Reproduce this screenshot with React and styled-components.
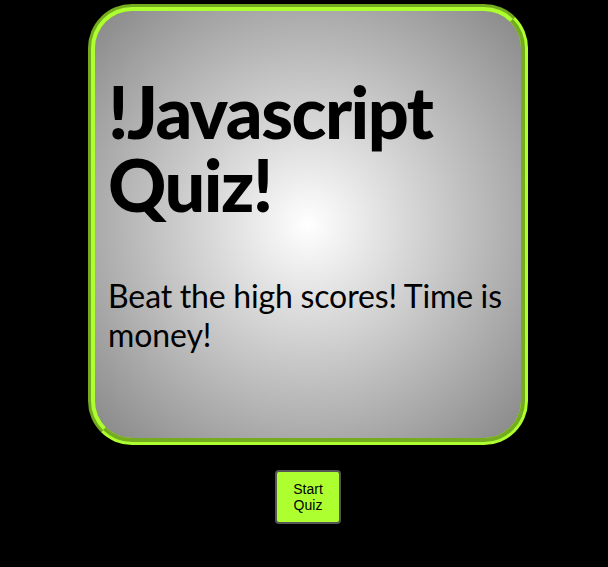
import React from "react";
import styled, { createGlobalStyle } from "styled-components";

const GlobalStyle = createGlobalStyle`
    html, body {
        margin: 0;
        padding: 0;
        background: #000000;
    }
`;

function App() {
    return (
        <>
            <GlobalStyle />
            <Page>
                <Card>
                    <Title>!Javascript Quiz!</Title>
                    <Intro>Beat the high scores! Time is money!</Intro>
                </Card>
                <StartButton type="button">Start Quiz</StartButton>
            </Page>
        </>
    );
}

const Page = styled.main`
    display: flex;
    flex-direction: column;
    align-items: center;
    gap: 25px;
    width: 608px;
    min-height: 567px;
    padding: 4px 0 0 8px;
    box-sizing: border-box;
`;

const Card = styled.section`
    width: 440px;
    height: 441px;
    box-sizing: border-box;
    border: 7px groove greenyellow;
    border-radius: 44px;
    background: radial-gradient(circle, #ffffff, #878787);
    padding: 64px 2px 0 13px;
    font-family: "Gill Sans", "Lato", sans-serif;
    color: #000000;
`;

const Title = styled.h1`
    margin: 0;
    font-size: 72px;
    font-weight: 900;
    line-height: 73px;
    letter-spacing: -1.5px;
`;

const Intro = styled.p`
    margin: 55px 0 0;
    font-size: 32px;
    font-weight: 400;
    line-height: 39px;
    letter-spacing: -0.1px;
    word-spacing: -0.5px;
`;

const StartButton = styled.button`
    width: 66px;
    height: 54px;
    background: greenyellow;
    border: 2px solid #555555;
    border-radius: 4px;
    font-family: "Liberation Sans", Arial, sans-serif;
    font-size: 14px;
    color: #000000;
    line-height: 16px;
    padding: 0 10px;
`;

export default App;
